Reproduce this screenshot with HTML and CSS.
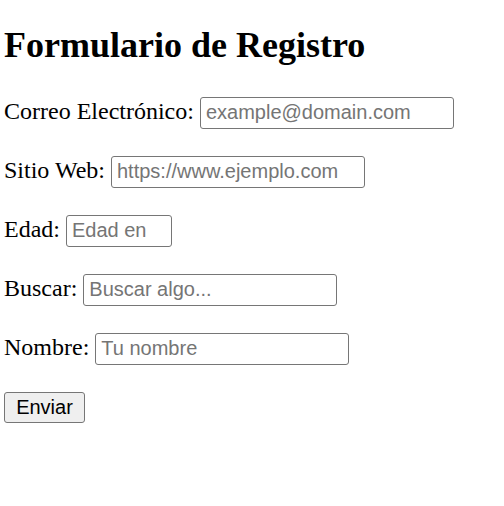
FILE: index.html
```html
<!DOCTYPE html>
<html lang="es">
<head>
<meta charset="utf-8">
<title>Formulario de Registro</title>
<link rel="stylesheet" href="styles.css">
</head>
<body>
<h1 class="title">Formulario de Registro</h1>
<form class="form">
  <p class="row"><label for="email">Correo Electrónico:</label> <input class="field" id="email" type="email" placeholder="example@domain.com"></p>
  <p class="row"><label for="web">Sitio Web:</label> <input class="field" id="web" type="url" placeholder="https://www.ejemplo.com"></p>
  <p class="row"><label for="edad">Edad:</label> <input class="field field-short" id="edad" type="text" placeholder="Edad en"></p>
  <p class="row"><label for="buscar">Buscar:</label> <input class="field" id="buscar" type="text" placeholder="Buscar algo..."></p>
  <p class="row"><label for="nombre">Nombre:</label> <input class="field" id="nombre" type="text" placeholder="Tu nombre"></p>
  <p class="row"><button class="submit" type="submit">Enviar</button></p>
</form>
</body>
</html>
```
FILE: styles.css
```css
html, body {
  background: #fff;
}
body {
  margin: 0 4px;
  font-family: "Liberation Serif", "Times New Roman", serif;
  font-size: 24px;
  color: #000;
}
.title {
  font-size: 36px;
  font-weight: bold;
  margin: 24px 0 28px;
}
.form {
  margin: 0;
}
.row {
  margin: 24px 0;
  line-height: 35px;
}
.field {
  box-sizing: border-box;
  width: 254px;
  height: 32px;
  padding: 2px 5px;
  font-family: "Liberation Sans", Arial, sans-serif;
  font-size: 20px;
  color: #000;
  border: 1px solid #767676;
  border-radius: 3px;
  background: #fff;
  vertical-align: baseline;
}
.field::placeholder {
  color: #757575;
}
.field-short {
  width: 106px;
}
.submit {
  box-sizing: border-box;
  width: 81px;
  height: 31px;
  padding: 1px 6px;
  font-family: "Liberation Sans", Arial, sans-serif;
  font-size: 20px;
  color: #000;
  background: #efefef;
  border: 1px solid #767676;
  border-radius: 3px;
}
```
